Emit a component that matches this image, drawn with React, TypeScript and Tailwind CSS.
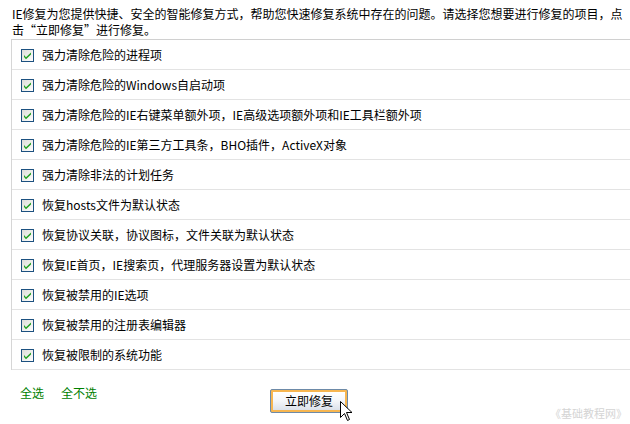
import React from "react";

const items = [
  "强力清除危险的进程项",
  "强力清除危险的Windows自启动项",
  "强力清除危险的IE右键菜单额外项，IE高级选项额外项和IE工具栏额外项",
  "强力清除危险的IE第三方工具条，BHO插件，ActiveX对象",
  "强力清除非法的计划任务",
  "恢复hosts文件为默认状态",
  "恢复协议关联，协议图标，文件关联为默认状态",
  "恢复IE首页，IE搜索页，代理服务器设置为默认状态",
  "恢复被禁用的IE选项",
  "恢复被禁用的注册表编辑器",
  "恢复被限制的系统功能",
];

function CheckBox() {
  return (
    <svg width="13" height="13" viewBox="0 0 13 13" className="shrink-0">
      <defs>
        <linearGradient id="cbg" x1="0" y1="0" x2="1" y2="1">
          <stop offset="0" stopColor="#dcdcd7" />
          <stop offset="1" stopColor="#ffffff" />
        </linearGradient>
      </defs>
      <rect x="0.5" y="0.5" width="12" height="12" fill="url(#cbg)" stroke="#1c5180" />
      <path d="M3 6 L5 8.3 L10 3.5 L10 5.5 L5 10.3 L3 8 Z" fill="#21a121" />
    </svg>
  );
}

export default function App() {
  return (
    <div
      className="relative w-[630px] h-[424px] bg-white text-black overflow-hidden text-[12px]"
      style={{ fontFamily: '"Noto Sans CJK SC", "Noto Sans", sans-serif' }}
    >
      <div className="pt-[6px] pl-[12px] pr-[4px] leading-[16px]">
        IE修复为您提供快捷、安全的智能修复方式，帮助您快速修复系统中存在的问题。请选择您想要进行修复的项目，点
        <br />
        击“立即修复”进行修复。
      </div>
      <div className="ml-[11px] mt-[1px] border-l border-t border-l-[#d6d6d6] border-t-[#d0d0d0]">
        {items.map((t) => (
          <div
            key={t}
            className="h-[30px] border-b border-[#e3e3e3] flex items-center pl-[9px] gap-[8px] pt-[1px]"
          >
            <CheckBox />
            <span className="leading-none">{t}</span>
          </div>
        ))}
      </div>
      <div className="flex items-start">
        <div className="flex gap-[17px] pl-[20px] pt-[14px] text-[#008000]">
          <span>全选</span>
          <span>全不选</span>
        </div>
        <div className="ml-[173px] mt-[19px] w-[78px] h-[24px] border border-[#6d8aa8] rounded-[2px] p-[2px] bg-[#f7b650]">
          <div className="w-full h-full bg-gradient-to-b from-white via-[#f4f6f9] to-[#dbe1ea] flex items-center justify-center leading-none">
            立即修复
          </div>
        </div>
      </div>
      <svg
        className="absolute left-[340px] top-[401px]"
        width="13"
        height="21"
        viewBox="0 0 13 21"
      >
        <path
          d="M0.5 0.5 L0.5 16.5 L4.5 12.5 L7.5 19.5 L9.5 18.5 L6.5 11.5 L12 11.5 Z"
          fill="#ffffff"
          stroke="#000000"
          strokeWidth="1"
          strokeLinejoin="miter"
        />
      </svg>
      <div className="absolute left-[550px] top-[408px] text-[11px] text-[#d4d4d4] leading-none">
        《基础教程网》
      </div>
    </div>
  );
}
